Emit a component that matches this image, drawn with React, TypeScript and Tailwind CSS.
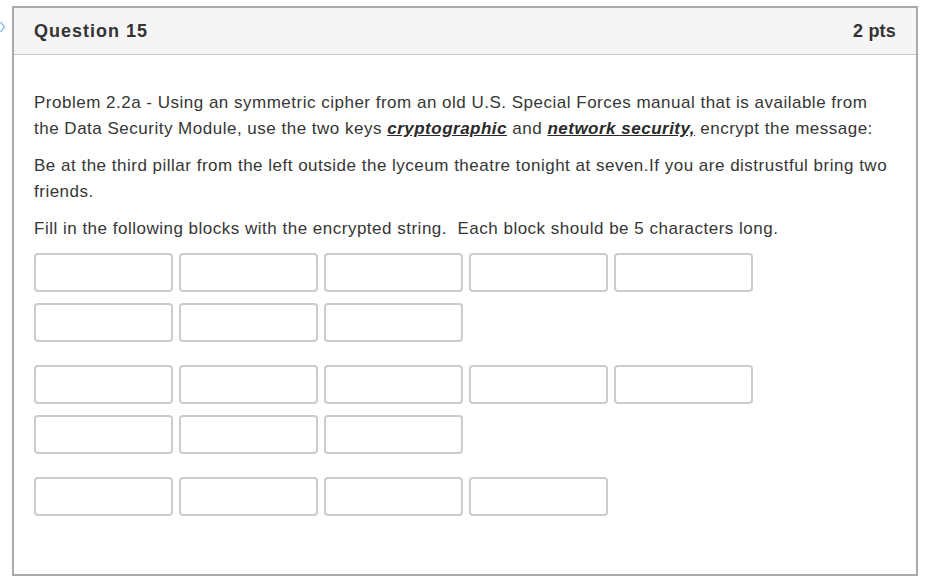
import React from "react";

function Block() {
  return <div className="w-[139px] h-[39px] border-2 border-[#cccccc] rounded-[4px] bg-white" />;
}

function BlockRow({ count }: { count: number }) {
  return (
    <div className="flex gap-[6px]">
      {Array.from({ length: count }).map((_, i) => (
        <Block key={i} />
      ))}
    </div>
  );
}

export default function App() {
  return (
    <div
      className="relative w-[936px] h-[576px] bg-white text-[#363636]"
      style={{ fontFamily: '"Liberation Sans", Arial, sans-serif' }}
    >
      {/* side nav chevron, mostly off-screen */}
      <svg className="absolute left-0 top-[21px]" width="6" height="12" viewBox="0 0 6 12">
        <path d="M0.5 1 L4.5 6 L0.5 11" fill="none" stroke="#8ab8dc" strokeWidth="1.3" />
      </svg>

      <div className="ml-[12px] pt-[6px]">
        <div className="w-[906px] h-[570px] border-2 border-[#aaaaaa] flex flex-col">
          <div className="h-[47px] bg-[#f5f5f5] border-b border-[#c8c8c8] flex items-center justify-between pl-[20px] pr-[20px]">
            <span className="text-[18px] font-bold tracking-[1px] text-[#333333]">Question 15</span>
            <span className="text-[18px] font-bold tracking-[0.2px] text-[#333333]">2 pts</span>
          </div>

          <div className="px-[20px] pt-[35px] text-[17px] tracking-[0.5px] leading-[26px]">
            <p className="mb-[11px] whitespace-nowrap">
              Problem 2.2a - Using an symmetric cipher from an old U.S. Special Forces manual that is available from
              <br />
              the Data Security Module, use the two keys{" "}
              <span className="font-bold italic underline text-[#2a2a2a]">cryptographic</span> and{" "}
              <span className="font-bold italic underline text-[#2a2a2a]">network security,</span> encrypt the message:
            </p>
            <p className="mb-[11px] whitespace-nowrap">
              Be at the third pillar from the left outside the lyceum theatre tonight at seven.If you are distrustful bring two
              <br />
              friends.
            </p>
            <p className="whitespace-nowrap">
              Fill in the following blocks with the encrypted string.&nbsp; Each block should be 5 characters long.
            </p>

            <div className="mt-[11px] flex flex-col gap-[23px] tracking-normal">
              <div className="flex flex-col gap-[11px]">
                <BlockRow count={5} />
                <BlockRow count={3} />
              </div>
              <div className="flex flex-col gap-[11px]">
                <BlockRow count={5} />
                <BlockRow count={3} />
              </div>
              <div className="flex flex-col gap-[11px]">
                <BlockRow count={4} />
              </div>
            </div>
          </div>
        </div>
      </div>
    </div>
  );
}
